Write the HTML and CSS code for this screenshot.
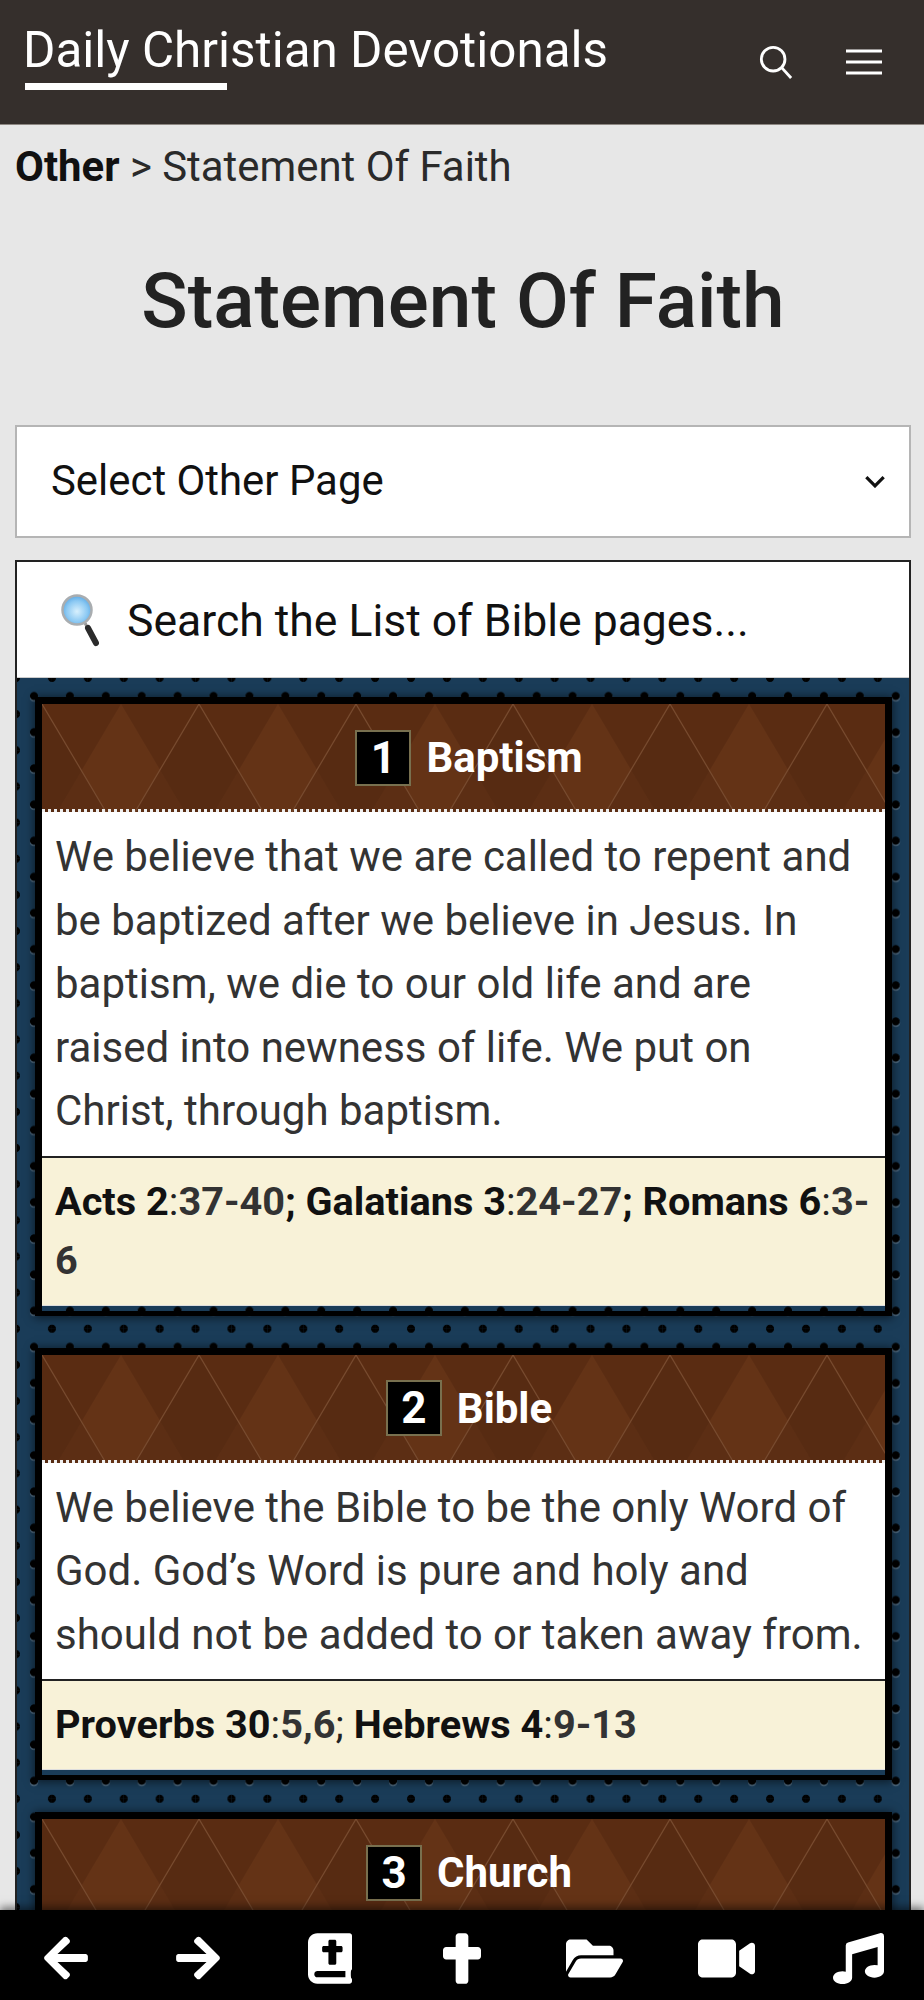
FILE: index.html
```html
<!DOCTYPE html>
<html lang="en">
<head>
<meta charset="utf-8">
<title>Statement Of Faith</title>
<link rel="stylesheet" href="styles.css">
</head>
<body>
<div class="app">
  <header class="topbar">
    <div class="brand"><span class="brand-text">Daily Christian Devotionals</span><span class="brand-line"></span></div>
    <div class="top-icons">
      <svg class="ic-search" viewBox="0 0 36 36"><circle cx="15" cy="15" r="12.5"/><path d="M24 24l10 11"/></svg>
      <svg class="ic-menu" viewBox="0 0 36 26"><path d="M0 2h36M0 13h36M0 24h36"/></svg>
    </div>
  </header>
  <main class="content">
    <div class="crumb"><b>Other</b> &gt; Statement Of Faith</div>
    <h1 class="title">Statement Of Faith</h1>
    <div class="select"><span>Select Other Page</span>
      <svg class="chev" viewBox="0 0 20 12"><path d="M2 2l8 8 8-8"/></svg>
    </div>
    <section class="panel">
      <div class="searchbox">
        <svg class="lens" viewBox="0 0 38 54">
          <defs><radialGradient id="g" cx=".5" cy=".55" r=".6"><stop offset="0" stop-color="#d8f0fd"/><stop offset=".6" stop-color="#8cc9f3"/><stop offset="1" stop-color="#4d9fe0"/></radialGradient></defs>
          <path d="M24 30l11 20" stroke="#999" stroke-width="3"/>
          <path d="M27 35l8 15" stroke="#2b2b2b" stroke-width="6" stroke-linecap="round"/>
          <circle cx="16" cy="17" r="14.5" fill="url(#g)" stroke="#a9adb0" stroke-width="2.5"/>
        </svg>
        <span>Search the List of Bible pages...</span>
      </div>
      <div class="cards">
        <article class="card">
          <div class="card-head"><span class="num">1</span><span class="name">Baptism</span></div>
          <p class="card-body">We believe that we are called to repent and be baptized after we believe in Jesus. In baptism, we die to our old life and are raised into newness of life. We put on Christ, through baptism.</p>
          <p class="refs"><b>Acts 2</b>:<strong>37-40</strong><b>;</b> <b>Galatians 3</b>:<strong>24-27</strong><b>;</b> <b>Romans 6</b>:<strong>3-<br>6</strong></p>
        </article>
        <article class="card">
          <div class="card-head"><span class="num">2</span><span class="name">Bible</span></div>
          <p class="card-body">We believe the Bible to be the only Word of God. God’s Word is pure and holy and should not be added to or taken away from.</p>
          <p class="refs"><b>Proverbs 30</b>:<strong>5,6</strong>; <b>Hebrews 4</b>:<strong>9-13</strong></p>
        </article>
        <article class="card">
          <div class="card-head"><span class="num">3</span><span class="name">Church</span></div>
        </article>
      </div>
    </section>
  </main>
  <nav class="bottombar">
    <svg class="b1" viewBox="0 0 448 512"><path d="M257.5 445.1l-22.2 22.2c-9.4 9.4-24.6 9.4-33.9 0L7 273c-9.4-9.4-9.4-24.6 0-33.9L201.4 44.7c9.4-9.4 24.6-9.4 33.9 0l22.2 22.2c9.5 9.5 9.3 25-.4 34.3L136.6 216H424c13.3 0 24 10.7 24 24v32c0 13.3-10.7 24-24 24H136.6l120.5 114.8c9.8 9.3 10 24.8.4 34.3z"/></svg>
    <svg class="b1" viewBox="0 0 448 512"><path d="M190.5 66.9l22.2-22.2c9.4-9.4 24.6-9.4 33.9 0L441 239c9.4 9.4 9.4 24.6 0 33.9L246.6 467.3c-9.4 9.4-24.6 9.4-33.9 0l-22.2-22.2c-9.5-9.5-9.3-25 .4-34.3L311.4 296H24c-13.3 0-24-10.7-24-24v-32c0-13.3 10.7-24 24-24h287.4L190.9 101.2c-9.8-9.3-10-24.8-.4-34.3z"/></svg>
    <svg class="b2" viewBox="0 0 448 512"><path d="M448 358.4V25.6c0-16-9.6-25.6-25.6-25.6H96C41.6 0 0 41.6 0 96v320c0 54.4 41.6 96 96 96h326.4c12.8 0 25.6-9.6 25.6-25.6v-16c0-6.4-3.2-12.8-9.6-19.2-3.2-16-3.2-60.8 0-73.6 6.4-3.2 9.6-9.6 9.6-19.2zM144 144c0-8.84 7.16-16 16-16h48V80c0-8.84 7.16-16 16-16h48c8.84 0 16 7.16 16 16v48h48c8.84 0 16 7.16 16 16v32c0 8.84-7.16 16-16 16h-48v112c0 8.84-7.16 16-16 16h-48c-8.84 0-16-7.16-16-16V192h-48c-8.84 0-16-7.16-16-16v-32zm236.8 304H96c-19.2 0-32-12.8-32-32s16-32 32-32h284.8v64z"/></svg>
    <svg class="b3" viewBox="0 0 384 512"><path d="M352 140h-96V32c0-17.67-14.33-32-32-32h-64c-17.67 0-32 14.33-32 32v108H32c-17.67 0-32 14.33-32 32v62c0 17.67 14.33 32 32 32h96v214c0 17.67 14.33 32 32 32h64c17.67 0 32-14.33 32-32V266h96c17.67 0 32-14.33 32-32v-62c0-17.67-14.33-32-32-32z"/></svg>
    <svg class="b4" viewBox="0 0 576 512"><path d="M572.694 292.093L500.27 416.248A63.997 63.997 0 0 1 444.989 448H45.025c-18.523 0-30.064-20.093-20.731-36.093l72.424-124.155A64 64 0 0 1 152 256h399.964c18.523 0 30.064 20.093 20.73 36.093zM152 224h328v-48c0-26.51-21.49-48-48-48H272l-64-64H48C21.49 64 0 85.49 0 112v278.046l69.077-118.418C86.214 242.25 117.989 224 152 224z"/></svg>
    <svg class="b4" viewBox="0 0 576 512"><path d="M336.2 64H47.8C21.4 64 0 85.4 0 111.8v288.4C0 426.6 21.4 448 47.8 448h288.4c26.4 0 47.8-21.4 47.8-47.8V111.8c0-26.4-21.4-47.8-47.8-47.8zm189.4 37.7L416 177.3v157.4l109.6 75.5c21.2 14.6 50.4-.3 50.4-25.8V127.5c0-25.4-29.1-40.4-50.4-25.8z"/></svg>
    <svg class="b5" viewBox="0 0 512 512"><path d="M470.38 1.51L150.41 96A32 32 0 0 0 128 126.51v261.41A139 139 0 0 0 96 384c-53 0-96 28.66-96 64s43 64 96 64 96-28.66 96-64V214.32l256-75v184.61a138.4 138.4 0 0 0-32-3.93c-53 0-96 28.66-96 64s43 64 96 64 96-28.65 96-64V32a32 32 0 0 0-41.62-30.49z"/></svg>
  </nav>
</div>
</body>
</html>
```
FILE: styles.css
```css
* { box-sizing: border-box; }
html, body { margin: 0; padding: 0; }
body { font-family: Roboto, "Liberation Sans", sans-serif; color: #222; background: #e7e7e7; }
.app { height: 2000px; display: flex; flex-direction: column; overflow: hidden; }

.topbar { height: 125px; flex: none; background: #352f2c; border-bottom: 1px solid #8d8782; display: flex; justify-content: space-between; padding: 0 42px 0 23px; position: relative; z-index: 2; }
.brand { display: flex; flex-direction: column; align-items: flex-start; padding-top: 20px; }
.brand-text { color: #fff; font-size: 49.4px; line-height: 60px; white-space: nowrap; }
.brand-line { width: 202px; height: 7px; background: #fff; margin-top: 3px; margin-left: 2px; }
.top-icons { display: flex; gap: 53px; padding-top: 45px; align-items: flex-start; }
.ic-search { width: 34px; height: 34px; fill: none; stroke: #fff; stroke-width: 3; }
.ic-menu { width: 36px; height: 26px; margin-top: 4px; fill: none; stroke: #fff; stroke-width: 3; }

.content { flex: 1; min-height: 0; overflow: hidden; padding: 0 13px 0 15px; }
.crumb { font-size: 41.9px; line-height: 60px; margin-top: 12px; color: #2a2a2a; }
.crumb b { color: #111; font-weight: 700; }
.title { font-size: 76.6px; line-height: 90px; font-weight: 500; text-align: center; margin: 59px 0 0; color: #222; }
.select { height: 113px; margin-top: 79px; background: #fff; border: 2px solid #b5b5b5; display: flex; align-items: center; justify-content: space-between; padding: 0 23px 2px 34px; font-size: 41.9px; color: #111; }
.chev { width: 22px; height: 13px; margin-top: 2px; fill: none; stroke: #111; stroke-width: 3; }

.panel { margin-top: 22px; border: 2px solid #222; border-bottom: 0; }
.searchbox { height: 116px; background: #fff; border-bottom: 1px solid #ccc; display: flex; align-items: center; padding-left: 42px; font-size: 44.5px; color: #111; }
.searchbox span { padding-top: 2px; }
.lens { width: 38px; height: 54px; margin-right: 28px; margin-left: 2px; flex: none; }

.cards {
  padding: 19px 17px 0 18px;
  display: flex; flex-direction: column; gap: 32px;
  background-color: #1a3c58;
  background-position: -1px 0;
  background-image:
    radial-gradient(circle at 18px 18px, #000 3.6px, transparent 4.4px),
    radial-gradient(circle at 0 0, #000 3.6px, transparent 4.4px),
    radial-gradient(circle at 36px 36px, #000 3.6px, transparent 4.4px),
    radial-gradient(circle at 36px 0, #000 3.6px, transparent 4.4px),
    radial-gradient(circle at 0 36px, #000 3.6px, transparent 4.4px),
    radial-gradient(circle at 18px 19.5px, rgba(255,255,255,.22) 3.8px, transparent 4.6px);
  background-size: 35.92px 36.16px;
}
.card { border: solid #000; border-width: 7px 7px 5px; padding-bottom: 5px; box-shadow: 0 1px 9px 1px rgba(0,0,0,.55); }
.card-head {
  height: 108px; display: flex; align-items: center; justify-content: center; gap: 15px;
  padding: 2px 0 0 11px;
  border-bottom: 3px dotted #eee;
  background-color: #5a2c12;
  background-position: 0 0;
  background-size: 157px 108px;
  background-image: url("data:image/svg+xml,%3Csvg xmlns='http://www.w3.org/2000/svg' width='157' height='108'%3E%3Cpath d='M79 0L15 108H143Z' fill='%23643316'/%3E%3Cpath d='M0 0L64 108H-64ZM157 0L93 108H221Z' fill='%23542911' opacity='.5'/%3E%3Cpath d='M0 0L64 108M157 0L93 108' fill='none' stroke='%23774a2e' stroke-width='1.2'/%3E%3Cpath d='M157 0L221 108M0 0L-64 108' fill='none' stroke='%23774a2e' stroke-width='1.2'/%3E%3C/svg%3E");
}
.num { width: 56px; height: 56px; background: #000; border: 2px solid #78704f; color: #fff; font-size: 44px; font-weight: 700; display: flex; align-items: center; justify-content: center; }
.name { color: #fff; font-size: 42px; font-weight: 700; }
.card-body { margin: 0; background: #fff; padding: 13px 13px 13px; font-size: 42px; line-height: 63.5px; color: #333; }
.refs { margin: 0; background: #f8f2d8; border-top: 2px solid #222; border-bottom: 1px solid #ddd; padding: 14px 8px 15px 13px; font-size: 39.7px; line-height: 59px; color: #222; }
.refs b { font-weight: 700; color: #111; }
.refs strong { font-weight: 700; color: #333; }

.bottombar { height: 90px; flex: none; background: #000; display: grid; grid-template-columns: repeat(7, 132px); justify-items: center; align-items: center; padding-top: 6px; position: relative; z-index: 2; box-shadow: 0 -3px 8px rgba(0,0,0,.5); }
.bottombar svg { fill: #fff; display: block; }
.b1 { width: 44px; height: 50px; }
.b2 { width: 44px; height: 51px; }
.b3 { width: 38px; height: 51px; }
.b4 { width: 57px; height: 51px; }
.b5 { width: 51px; height: 51px; }
```
